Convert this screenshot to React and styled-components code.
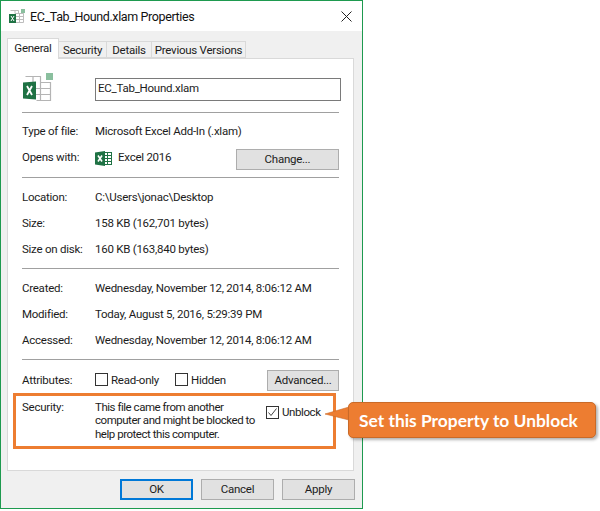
import React from "react";
import styled, { createGlobalStyle } from "styled-components";

const Global = createGlobalStyle`
  html, body { margin: 0; padding: 0; background: #fff; }
  body { width: 600px; height: 511px; overflow: hidden; font-family: Roboto, "Liberation Sans", sans-serif; font-size: 11.5px; letter-spacing: -0.25px; color: #1c1c1c; }
`;
const Stage = styled.div`position: relative; width: 600px; height: 511px; background: #fff;`;
const Win = styled.div`
  box-sizing: border-box; width: 363px; height: 509px; border: 1px solid #1e9a4f; background: #f0f0f0;
  display: flex; flex-direction: column;
`;
const TitleBar = styled.div`
  height: 30px; background: #fff; display: flex; align-items: center; padding: 0 10px 0 7px; flex: none;
`;
const TitleText = styled.div`font-size: 12.5px; letter-spacing: -0.38px; color: #111; flex: 1; padding-left: 5px;`;
const Tabs = styled.div`display: flex; padding: 9px 0 0 6px; height: 18px; align-items: flex-end; flex: none; position: relative; z-index: 1;`;
const Tab = styled.div`
  box-sizing: border-box; width: ${p => p.$w}px; height: ${p => p.$active ? 21 : 17}px; text-align: center;
  border: 1px solid #d9d9d9; border-left-width: ${p => p.$active ? 1 : 0}px;
  border-bottom: ${p => p.$active ? "none" : "1px solid #d9d9d9"};
  background: ${p => p.$active ? "#fff" : "#f0f0f0"}; line-height: ${p => p.$active ? 19 : 16}px; white-space: nowrap;
  margin-bottom: ${p => p.$active ? -1 : 0}px;
`;
const Panel = styled.div`
  box-sizing: border-box; margin: 0 8px 0 6px; height: 413px; background: #fff; border: 1px solid #d9d9d9; flex: none;
  padding: 0 14px 0 14px; display: flex; flex-direction: column;
`;
const NameRow = styled.div`box-sizing: border-box; display: flex; align-items: flex-start; height: 53px; padding-top: 14px; flex: none;`;
const BigIcon = styled.div`width: 73px; flex: none; display: flex; padding-left: 1px; box-sizing: border-box;`;
const NameInput = styled.div`
  box-sizing: border-box; width: 246px; height: 23px; border: 1px solid #7a7a7a; line-height: 19px; padding-left: 2px; margin-top: 5px; flex: none;
`;
const Sep = styled.div`height: 1px; background: #a0a0a0; flex: none;`;
const Section = styled.div`display: flex; flex-direction: column; flex: none; height: ${p => p.$h}px; padding-top: ${p => p.$pt}px; box-sizing: border-box;`;
const Row = styled.div`display: flex; align-items: center; height: 26px; flex: none;`;
const AttrRow = styled.div`box-sizing: border-box; display: flex; align-items: center; height: 33px; padding-top: 6px; flex: none;`;
const Label = styled.div`width: 73px; flex: none;`;
const Value = styled.div`display: flex; align-items: center; gap: 6px; flex: 1; min-width: 0; white-space: nowrap;`;
const Attrs = styled(Value)`gap: 0;`;
const IconBox = styled.div`display: flex; margin-top: 3px;`;
const Btn = styled.div`
  box-sizing: border-box; width: ${p => p.$w}px; height: 21px; background: #e1e1e1; border: 1px solid #adadad; text-align: center; line-height: 19px; flex: none;
  margin-top: ${p => p.$mt || 0}px;
`;
const Check = styled.div`
  box-sizing: border-box; width: 13px; height: 13px; border: 1px solid #333; background: #fff; flex: none; display: flex; align-items: center; justify-content: center;
`;
const CheckLabel = styled.div`display: flex; align-items: center; gap: 3px; white-space: nowrap; width: ${p => p.$w ? p.$w + "px" : "auto"};`;
const Alert = styled.div`
  box-sizing: border-box; width: 323px; height: 56px; margin-left: -9px; border: 3px solid #ed7d31; padding: 5px 0 0 6px; display: flex; flex: none; line-height: 13.3px;
`;
const AlertLabel = styled.div`width: 73px; flex: none;`;
const AlertText = styled.div`width: 171px; flex: none; letter-spacing: -0.47px;`;
const AlertCheck = styled.div`padding-top: 5px; letter-spacing: -0.4px;`;
const Footer = styled.div`display: flex; justify-content: flex-end; gap: 8px; padding: 8px 7px 0 0; flex: none;`;
const DlgBtn = styled.div`
  box-sizing: border-box; width: 73px; height: 21px; background: #e1e1e1; border: 1px solid ${p => p.$def ? "#0078d7" : "#adadad"}; box-shadow: ${p => p.$def ? "inset 0 0 0 1px #0078d7" : "none"};
  text-align: center; line-height: 19px;
`;
const Callout = styled.div`
  position: absolute; left: 348px; top: 402px; width: 248px; height: 36px; box-sizing: border-box; background: #ed7d31; border: 1px solid #c96a28; border-radius: 5px;
  color: #fff; font-family: Lato, sans-serif; font-weight: 700; font-size: 17.4px; letter-spacing: 0; line-height: 36px; padding-left: 10px; white-space: nowrap;
  box-shadow: 2px 2px 3px rgba(0,0,0,.3);
`;
const Tail = styled.svg`position: absolute; left: 324px; top: 404px; overflow: visible;`;

const ExcelDoc = () => (
  <svg width={31} height={28} viewBox="0 0 31 28">
    <rect x="23" y="0" width="7" height="7" fill="#8abf9e" />
    <g fill="none" stroke="#b4b4b4" strokeWidth="1.2">
      <path d="M2.5 3.5h15v6h10v18h-14M10 3.5v6M17.5 9.5v18" />
      <path d="M13 15.5h14.5M13 21.5h14.5" />
    </g>
    <path d="M0 9.5l13-1v18l-13-1z" fill="#1f7244" />
    <path d="M4 13l5 9M9 13l-5 9" stroke="#fff" strokeWidth="1.8" />
  </svg>
);
const ExcelSmall = () => (
  <svg width={17} height={15} viewBox="0 0 17 15">
    <rect x="9.5" y="1.5" width="7" height="12" fill="#fff" stroke="#1f7244" />
    <path d="M9 4.5h7M9 7.5h7M9 10.5h7M12.5 2v11" stroke="#1f7244" />
    <path d="M0 1.5l10-1.5v15l-10-1.5z" fill="#1f7244" />
    <path d="M3 4.5l4 6M7 4.5l-4 6" stroke="#fff" strokeWidth="1.6" />
  </svg>
);
const Small = () => (
  <svg width={17} height={15} viewBox="0 0 17 15">
    <rect x="13" y="0" width="4" height="4" fill="#8abf9e" />
    <path d="M2.5 1.5h8v3h5v9H7M7 4.5h8.5M8 7.5h7.5M8 10.5h7.5M11.5 4.5v9M7 1.5v3" fill="none" stroke="#bdbdbd" />
    <rect x="1" y="5" width="7" height="9" fill="#1f7244" />
    <path d="M3 7l3 5M6 7l-3 5" stroke="#fff" />
  </svg>
);

export default function App() {
  return (
    <Stage>
      <Global />
      <Win>
        <TitleBar>
          <Small />
          <TitleText>EC_Tab_Hound.xlam Properties</TitleText>
          <svg width="11" height="11" viewBox="0 0 11 11"><path d="M.5.5l10 10M10.5.5l-10 10" stroke="#222" fill="none" /></svg>
        </TitleBar>
        <Tabs>
          <Tab $active $w={52}>General</Tab>
          <Tab $w={48}>Security</Tab>
          <Tab $w={45}>Details</Tab>
          <Tab $w={94}>Previous Versions</Tab>
        </Tabs>
        <Panel>
          <NameRow>
            <BigIcon><ExcelDoc /></BigIcon>
            <NameInput>EC_Tab_Hound.xlam</NameInput>
          </NameRow>
          <Sep />
          <Section $h={64} $pt={5}>
            <Row><Label>Type of file:</Label><Value>Microsoft Excel Add-In (.xlam)</Value></Row>
            <Row>
              <Label>Opens with:</Label>
              <Value><IconBox><ExcelSmall /></IconBox>Excel 2016</Value>
              <Btn $w={103} $mt={5}>Change...</Btn>
            </Row>
          </Section>
          <Sep />
          <Section $h={90} $pt={6}>
            <Row><Label>Location:</Label><Value>C:\Users\jonac\Desktop</Value></Row>
            <Row><Label>Size:</Label><Value>158 KB (162,701 bytes)</Value></Row>
            <Row><Label>Size on disk:</Label><Value>160 KB (163,840 bytes)</Value></Row>
          </Section>
          <Sep />
          <Section $h={90} $pt={6}>
            <Row><Label>Created:</Label><Value>Wednesday, November 12, 2014, 8:06:12 AM</Value></Row>
            <Row><Label>Modified:</Label><Value>Today, August 5, 2016, 5:29:39 PM</Value></Row>
            <Row><Label>Accessed:</Label><Value>Wednesday, November 12, 2014, 8:06:12 AM</Value></Row>
          </Section>
          <Sep />
          <AttrRow>
            <Label>Attributes:</Label>
            <Attrs>
              <CheckLabel $w={80}><Check />Read-only</CheckLabel>
              <CheckLabel><Check />Hidden</CheckLabel>
            </Attrs>
            <Btn $w={72} $mt={2}>Advanced...</Btn>
          </AttrRow>
          <Alert>
            <AlertLabel>Security:</AlertLabel>
            <AlertText>This file came from another computer and might be blocked to help protect this computer.</AlertText>
            <AlertCheck>
              <CheckLabel>
                <Check><svg width="11" height="11" viewBox="0 0 11 11"><path d="M1.5 5.5l2.5 3L9.5 1.5" fill="none" stroke="#444" /></svg></Check>
                Unblock
              </CheckLabel>
            </AlertCheck>
          </Alert>
        </Panel>
        <Footer>
          <DlgBtn $def>OK</DlgBtn>
          <DlgBtn>Cancel</DlgBtn>
          <DlgBtn>Apply</DlgBtn>
        </Footer>
      </Win>
      <Tail width="26" height="20" viewBox="0 0 26 20"><path d="M1 10L25 3v13z" fill="#ed7d31" stroke="#c96a28" strokeWidth=".6" /></Tail>
      <Callout>Set this Property to Unblock</Callout>
    </Stage>
  );
}
